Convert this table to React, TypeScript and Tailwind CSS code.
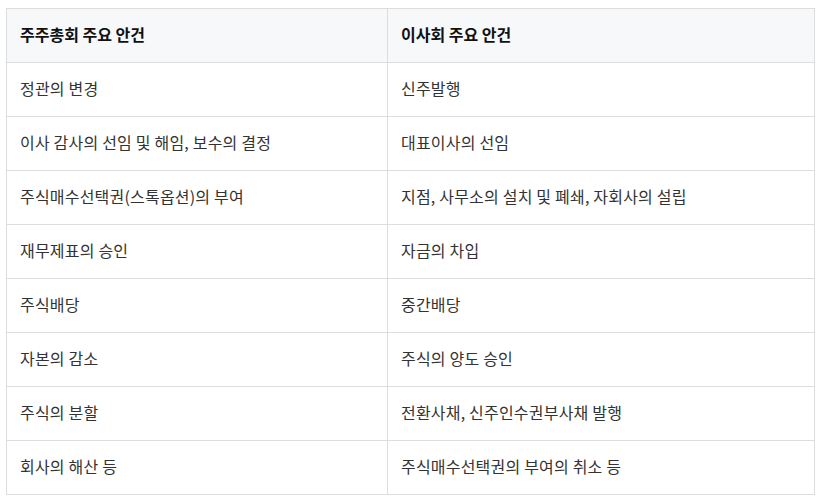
import React from 'react';

const rows: [string, string][] = [
  ['정관의 변경', '신주발행'],
  ['이사 감사의 선임 및 해임, 보수의 결정', '대표이사의 선임'],
  ['주식매수선택권(스톡옵션)의 부여', '지점, 사무소의 설치 및 폐쇄, 자회사의 설립'],
  ['재무제표의 승인', '자금의 차입'],
  ['주식배당', '중간배당'],
  ['자본의 감소', '주식의 양도 승인'],
  ['주식의 분할', '전환사채, 신주인수권부사채 발행'],
  ['회사의 해산 등', '주식매수선택권의 부여의 취소 등'],
];

const App = () => {
  return (
    <div className="min-h-screen bg-white pl-[6px] pt-[8px] font-['Noto_Sans_CJK_KR','Noto_Sans',sans-serif]">
      <table className="w-[809px] border-collapse text-[16px]">
        <thead>
          <tr className="bg-[#f6f8fa]">
            <th className="h-[54px] w-[381px] border border-[#dddddd] px-[13px] pb-[4px] text-left font-bold text-[#111]">
              주주총회 주요 안건
            </th>
            <th className="h-[54px] border border-[#dddddd] px-[13px] pb-[4px] text-left font-bold text-[#111]">
              이사회 주요 안건
            </th>
          </tr>
        </thead>
        <tbody>
          {rows.map(([left, right]) => (
            <tr key={left}>
              <td className="h-[54px] border border-[#dddddd] px-[13px] pb-[4px] text-[#333] tracking-[0.2px]">{left}</td>
              <td className="h-[54px] border border-[#dddddd] px-[13px] pb-[4px] text-[#333] tracking-[0.2px]">{right}</td>
            </tr>
          ))}
        </tbody>
      </table>
    </div>
  );
};

export default App;
